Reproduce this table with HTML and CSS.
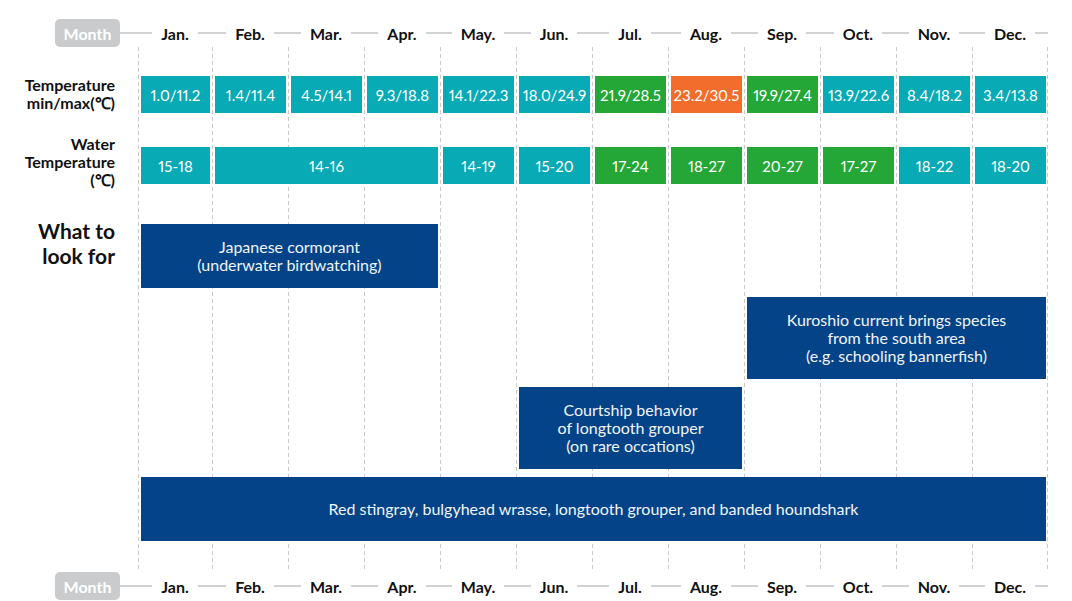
FILE: index.html
```html
<!DOCTYPE html>
<html lang="en">
<head>
<meta charset="utf-8">
<title>Seasonal diving calendar</title>
<link rel="stylesheet" href="styles.css">
</head>
<body>
<div class="chart">
  <!-- column guide lines -->
  <div class="gridline c2"></div>
  <div class="gridline c3"></div>
  <div class="gridline c4"></div>
  <div class="gridline c5"></div>
  <div class="gridline c6"></div>
  <div class="gridline c7"></div>
  <div class="gridline c8"></div>
  <div class="gridline c9"></div>
  <div class="gridline c10"></div>
  <div class="gridline c11"></div>
  <div class="gridline c12"></div>
  <div class="gridline c13 last"></div>

  <!-- top axis -->
  <div class="axis-start r-top"><span class="pill">Month</span><span class="rule"></span></div>
  <div class="axis-month r-top c2"><span class="rule"></span><span class="mlabel">Jan.</span><span class="rule"></span></div>
  <div class="axis-month r-top c3"><span class="rule"></span><span class="mlabel">Feb.</span><span class="rule"></span></div>
  <div class="axis-month r-top c4"><span class="rule"></span><span class="mlabel">Mar.</span><span class="rule"></span></div>
  <div class="axis-month r-top c5"><span class="rule"></span><span class="mlabel">Apr.</span><span class="rule"></span></div>
  <div class="axis-month r-top c6"><span class="rule"></span><span class="mlabel">May.</span><span class="rule"></span></div>
  <div class="axis-month r-top c7"><span class="rule"></span><span class="mlabel">Jun.</span><span class="rule"></span></div>
  <div class="axis-month r-top c8"><span class="rule"></span><span class="mlabel">Jul.</span><span class="rule"></span></div>
  <div class="axis-month r-top c9"><span class="rule"></span><span class="mlabel">Aug.</span><span class="rule"></span></div>
  <div class="axis-month r-top c10"><span class="rule"></span><span class="mlabel">Sep.</span><span class="rule"></span></div>
  <div class="axis-month r-top c11"><span class="rule"></span><span class="mlabel">Oct.</span><span class="rule"></span></div>
  <div class="axis-month r-top c12"><span class="rule"></span><span class="mlabel">Nov.</span><span class="rule"></span></div>
  <div class="axis-month r-top c13"><span class="rule"></span><span class="mlabel">Dec.</span><span class="rule"></span></div>

  <!-- air temperature -->
  <div class="row-label r-temp label-temp">Temperature<br>min/max(℃)</div>
  <div class="cell teal r-temp c2">1.0/11.2</div>
  <div class="cell teal r-temp c3">1.4/11.4</div>
  <div class="cell teal r-temp c4">4.5/14.1</div>
  <div class="cell teal r-temp c5">9.3/18.8</div>
  <div class="cell teal r-temp c6">14.1/22.3</div>
  <div class="cell teal r-temp c7">18.0/24.9</div>
  <div class="cell green r-temp c8">21.9/28.5</div>
  <div class="cell orange r-temp c9">23.2/30.5</div>
  <div class="cell green r-temp c10">19.9/27.4</div>
  <div class="cell teal r-temp c11">13.9/22.6</div>
  <div class="cell teal r-temp c12">8.4/18.2</div>
  <div class="cell teal r-temp c13">3.4/13.8</div>

  <!-- water temperature -->
  <div class="row-label r-water label-water">Water<br>Temperature<br>(℃)</div>
  <div class="cell teal r-water c2">15-18</div>
  <div class="cell teal r-water c3 span3">14-16</div>
  <div class="cell teal r-water c6">14-19</div>
  <div class="cell teal r-water c7">15-20</div>
  <div class="cell green r-water c8">17-24</div>
  <div class="cell green r-water c9">18-27</div>
  <div class="cell green r-water c10">20-27</div>
  <div class="cell green r-water c11">17-27</div>
  <div class="cell teal r-water c12">18-22</div>
  <div class="cell teal r-water c13">18-20</div>

  <!-- what to look for -->
  <div class="row-label big r-look1">What to<br>look for</div>
  <div class="box r-look1 c2 span4 h64">Japanese cormorant<br>(underwater birdwatching)</div>
  <div class="box r-look2 c10 span4 h82">Kuroshio current brings species<br>from the south area<br>(e.g. schooling bannerfish)</div>
  <div class="box r-look3 c7 span3 h82">Courtship behavior<br>of longtooth grouper<br>(on rare occations)</div>
  <div class="box r-look4 c2 span12 h64">Red stingray, bulgyhead wrasse, longtooth grouper, and banded houndshark</div>

  <!-- bottom axis -->
  <div class="axis-start r-bottom"><span class="pill">Month</span><span class="rule"></span></div>
  <div class="axis-month r-bottom c2"><span class="rule"></span><span class="mlabel">Jan.</span><span class="rule"></span></div>
  <div class="axis-month r-bottom c3"><span class="rule"></span><span class="mlabel">Feb.</span><span class="rule"></span></div>
  <div class="axis-month r-bottom c4"><span class="rule"></span><span class="mlabel">Mar.</span><span class="rule"></span></div>
  <div class="axis-month r-bottom c5"><span class="rule"></span><span class="mlabel">Apr.</span><span class="rule"></span></div>
  <div class="axis-month r-bottom c6"><span class="rule"></span><span class="mlabel">May.</span><span class="rule"></span></div>
  <div class="axis-month r-bottom c7"><span class="rule"></span><span class="mlabel">Jun.</span><span class="rule"></span></div>
  <div class="axis-month r-bottom c8"><span class="rule"></span><span class="mlabel">Jul.</span><span class="rule"></span></div>
  <div class="axis-month r-bottom c9"><span class="rule"></span><span class="mlabel">Aug.</span><span class="rule"></span></div>
  <div class="axis-month r-bottom c10"><span class="rule"></span><span class="mlabel">Sep.</span><span class="rule"></span></div>
  <div class="axis-month r-bottom c11"><span class="rule"></span><span class="mlabel">Oct.</span><span class="rule"></span></div>
  <div class="axis-month r-bottom c12"><span class="rule"></span><span class="mlabel">Nov.</span><span class="rule"></span></div>
  <div class="axis-month r-bottom c13"><span class="rule"></span><span class="mlabel">Dec.</span><span class="rule"></span></div>
</div>
</body>
</html>
```

FILE: styles.css
```css
html, body {
  margin: 0;
  padding: 0;
  background: #ffffff;
}

body {
  font-family: Lato, "Open Sans", sans-serif;
  color: #111111;
}

.chart {
  display: grid;
  grid-template-columns: 138px 74px repeat(11, 76px);
  grid-template-rows: 28px 66px 71px 104px 91px 90px 72px 29px 32px;
  padding-top: 19px;
}

/* rows */
.r-top { grid-row: 1; }
.r-temp { grid-row: 2; }
.r-water { grid-row: 3; }
.r-look1 { grid-row: 4; }
.r-look2 { grid-row: 5; }
.r-look3 { grid-row: 6; }
.r-look4 { grid-row: 7; }
.r-bottom { grid-row: 9; }

/* columns */
.c2 { grid-column-start: 2; }
.c3 { grid-column-start: 3; }
.c4 { grid-column-start: 4; }
.c5 { grid-column-start: 5; }
.c6 { grid-column-start: 6; }
.c7 { grid-column-start: 7; }
.c8 { grid-column-start: 8; }
.c9 { grid-column-start: 9; }
.c10 { grid-column-start: 10; }
.c11 { grid-column-start: 11; }
.c12 { grid-column-start: 12; }
.c13 { grid-column-start: 13; }
.span3 { grid-column-end: span 3; }
.span4 { grid-column-end: span 4; }
.span12 { grid-column-end: span 12; }

/* dashed guides */
.gridline {
  grid-row: 2 / 9;
  background-image: repeating-linear-gradient(to bottom, #c9c9c9 0 4px, transparent 4px 7px);
  background-size: 1px 100%;
  background-repeat: no-repeat;
  background-position: left top;
}
.gridline.last {
  background-image:
    repeating-linear-gradient(to bottom, #c9c9c9 0 4px, transparent 4px 7px),
    repeating-linear-gradient(to bottom, #c9c9c9 0 4px, transparent 4px 7px);
  background-size: 1px 100%, 1px 100%;
  background-position: left top, right top;
}

/* axis */
.axis-start {
  grid-column: 1;
  display: flex;
  align-items: center;
}
.r-bottom.axis-start,
.r-bottom.axis-month {
  align-self: end;
  height: 28px;
  margin-bottom: 2px;
}
.pill {
  margin-left: 55px;
  width: 65px;
  height: 28px;
  border-radius: 5px;
  background: #c9cbcc;
  color: #ffffff;
  font-weight: 700;
  font-size: 16px;
  display: flex;
  align-items: center;
  justify-content: center;
}
.rule {
  flex: 1;
  height: 2px;
  background: #d0d2d3;
}
.axis-month {
  display: flex;
  align-items: center;
}
.mlabel {
  padding: 0 9px;
  font-weight: 700;
  font-size: 16px;
  color: #111111;
  white-space: nowrap;
}

/* labels */
.row-label {
  grid-column: 1;
  text-align: right;
  padding-right: 23px;
  font-weight: 700;
  font-size: 16px;
  line-height: 18px;
  color: #111111;
}
.label-temp {
  align-self: end;
  margin-bottom: 1px;
}
.label-water {
  align-self: end;
  margin-bottom: -5px;
}
.row-label.big {
  align-self: start;
  margin-top: 34px;
  font-size: 21px;
  line-height: 25px;
}

/* value cells */
.cell {
  align-self: end;
  height: 37px;
  margin: 0 2px 0 3px;
  display: flex;
  align-items: center;
  justify-content: center;
  color: #ffffff;
  font-size: 15px;
  font-variant-numeric: proportional-nums;
  white-space: nowrap;
}
.teal { background: #08aab5; }
.green { background: #25a737; }
.orange { background: #f26c2b; }

/* feature boxes */
.box {
  align-self: end;
  margin: 0 2px 0 3px;
  background: #044387;
  color: #f1f4f8;
  font-size: 16px;
  line-height: 18px;
  text-align: center;
  display: flex;
  align-items: center;
  justify-content: center;
}
.h64 { height: 64px; }
.h82 { height: 82px; }
```
